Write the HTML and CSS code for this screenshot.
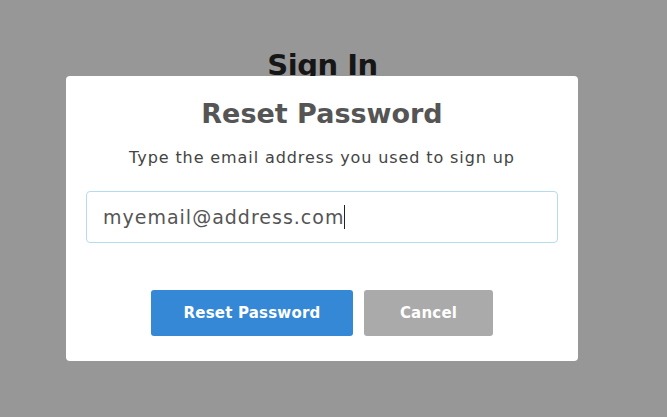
FILE: index.html
```html
<!DOCTYPE html>
<html>
<head>
<meta charset="utf-8">
<link rel="stylesheet" href="styles.css">
</head>
<body>
<div class="page">
  <h1 class="page-title">Sign In</h1>
</div>
<div class="overlay">
  <div class="modal">
    <h2 class="modal-title">Reset Password</h2>
    <p class="modal-text">Type the email address you used to sign up</p>
    <div class="field"><span class="field-value">myemail@address.com</span><span class="caret"></span></div>
    <div class="actions">
      <button class="btn btn-primary">Reset Password</button>
      <button class="btn btn-secondary">Cancel</button>
    </div>
  </div>
</div>
</body>
</html>
```
FILE: styles.css
```css
html, body {
  margin: 0;
  padding: 0;
  height: 100%;
}
body {
  background: #979797;
  font-family: "DejaVu Sans", sans-serif;
  overflow: hidden;
}
.page {
  display: flex;
  justify-content: center;
  padding-top: 45px;
}
.page-title {
  margin: 0;
  font-size: 29px;
  font-weight: 700;
  color: #161616;
  line-height: 40px;
  letter-spacing: -0.5px;
  transform: translateX(-11px);
}
.overlay {
  position: absolute;
  left: 0;
  top: 0;
  width: 100%;
  height: 100%;
}
.modal {
  position: absolute;
  left: 66px;
  top: 76px;
  width: 512px;
  height: 285px;
  box-sizing: border-box;
  background: #fff;
  border-radius: 4px;
  display: flex;
  flex-direction: column;
  align-items: center;
  padding: 18px 20px 0;
}
.modal-title {
  margin: 0;
  font-size: 27px;
  font-weight: 700;
  color: #555;
  line-height: 40px;
}
.modal-text {
  margin: 12px 0 0;
  font-size: 16px;
  letter-spacing: 0.9px;
  color: #444;
  line-height: 24px;
}
.field {
  margin-top: 21px;
  width: 472px;
  height: 52px;
  box-sizing: border-box;
  border: 1px solid #b5dbf1;
  border-radius: 4px;
  display: flex;
  align-items: center;
  padding-left: 16px;
  font-size: 19px;
  letter-spacing: 1px;
  color: #555;
}
.caret {
  display: inline-block;
  width: 1px;
  height: 24px;
  background: #222;
}
.actions {
  margin-top: 47px;
  display: flex;
  gap: 11px;
}
.btn {
  height: 46px;
  border: none;
  border-radius: 3px;
  color: #fff;
  font-family: inherit;
  font-size: 15px;
  font-weight: 700;
  letter-spacing: 0.2px;
  cursor: pointer;
}
.btn-primary {
  width: 202px;
  background: #3588d6;
}
.btn-secondary {
  width: 129px;
  background: #aaaaaa;
}
```
